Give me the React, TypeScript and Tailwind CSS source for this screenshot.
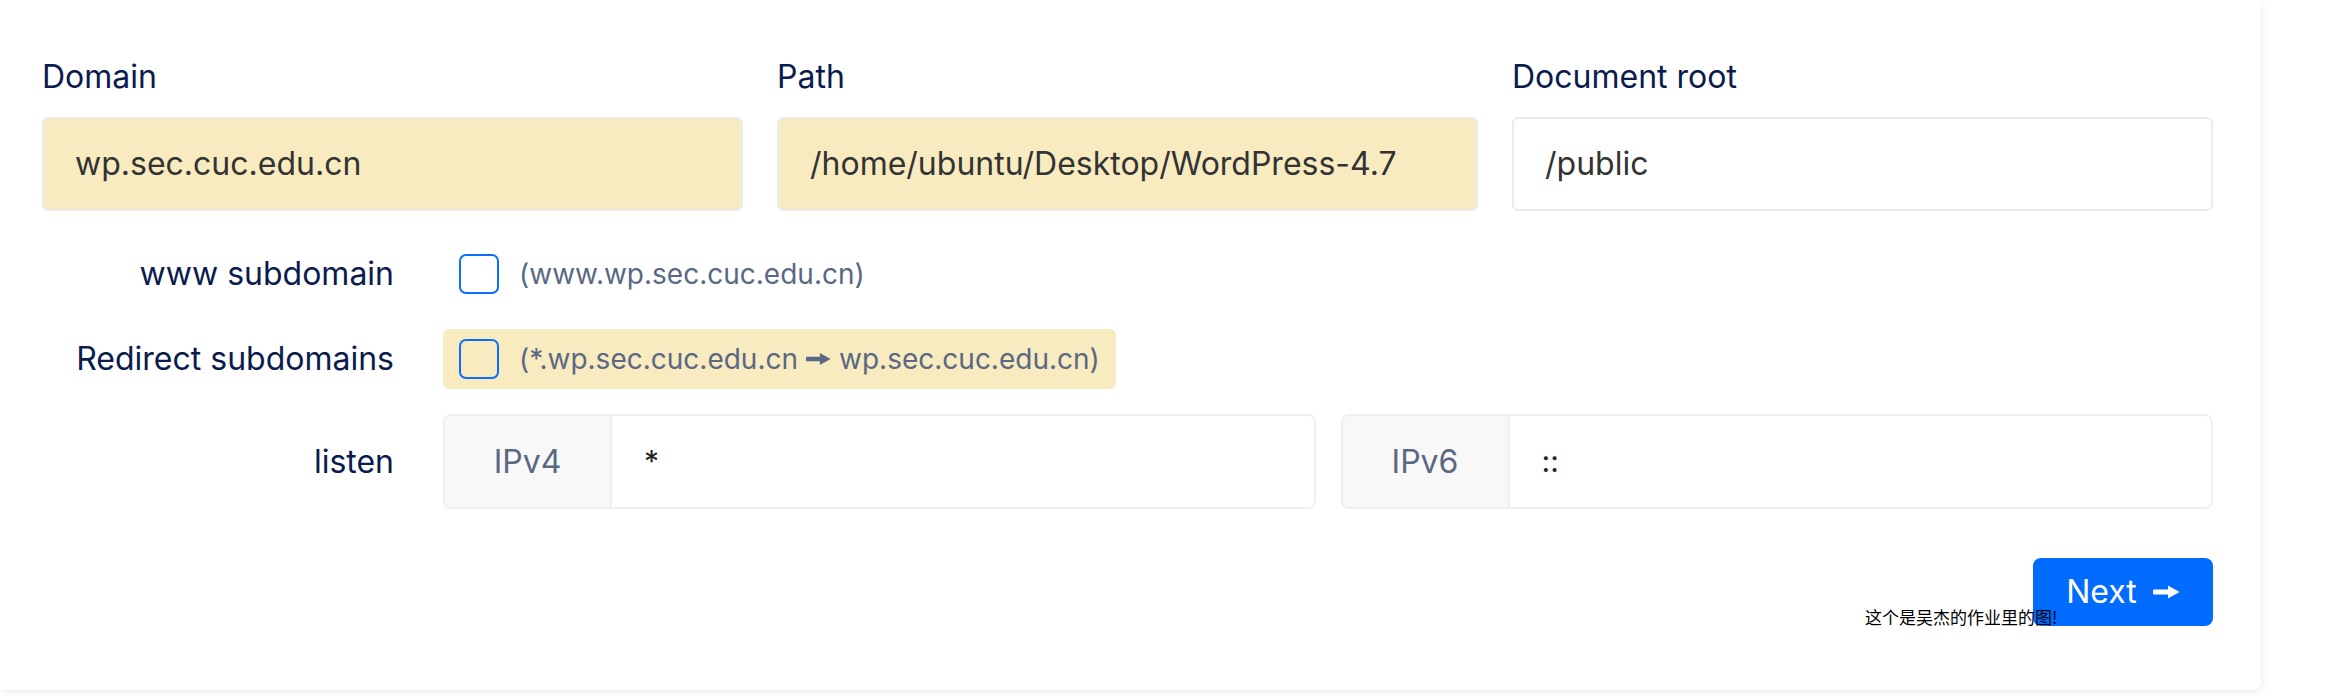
import React from 'react'

const font = { fontFamily: 'Inter, "Noto Sans", sans-serif' }

const Checkbox = () => (
  <span className="block w-[40px] h-[40px] shrink-0 rounded-[7px] border-2 border-[#0d6efd] bg-transparent" />
)

const Field = ({ label, value, filled }: { label: string; value: string; filled?: boolean }) => (
  <div className="flex flex-col">
    <label className="text-[32px] leading-[45px] text-[#0b1b4d] mb-[18px]">{label}</label>
    <div
      className={`h-[94px] rounded-[6px] border-2 border-[#ececec] flex items-center pl-[31px] text-[32px] text-[#333] ${
        filled ? 'bg-[#f9ebc0]' : 'bg-white'
      }`}
    >
      {value}
    </div>
  </div>
)

const ListenGroup = ({ name, value }: { name: string; value: string }) => (
  <div className="flex h-[95px] rounded-[8px] border-2 border-[#efefef] overflow-hidden">
    <div className="w-[167px] shrink-0 bg-[#f8f8f9] border-r-2 border-[#efefef] flex items-center justify-center text-[32px] text-[#5a6884]">
      {name}
    </div>
    <div className="flex-1 bg-white flex items-center pl-[32px] text-[30px] text-[#222]">{value}</div>
  </div>
)

// heavy right arrow (➞ in the original)
const Arrow = ({ w = 27 }: { w?: number }) => (
  <svg width={w} height="16" viewBox="0 0 27 16" className="inline-block align-middle" fill="currentColor">
    <rect x="0" y="5.5" width="17" height="5" rx="1" />
    <path d="M15 1.5 L26.5 8 L15 14.5 Z" />
  </svg>
)

const App = () => {
  return (
    <div className="w-[2332px] h-[696px] bg-white overflow-hidden" style={font}>
      <div className="relative w-[2261px] h-[690px] bg-white rounded-br-[8px] shadow-[1px_3px_6px_rgba(0,0,0,0.07)] pl-[42px] pr-[48px] pt-[54px]">
        {/* top fields */}
        <div className="grid grid-cols-3 gap-[34px]">
          <Field label="Domain" value="wp.sec.cuc.edu.cn" filled />
          <Field label="Path" value="/home/ubuntu/Desktop/WordPress-4.7" filled />
          <Field label="Document root" value="/public" />
        </div>

        {/* www subdomain */}
        <div className="flex items-center h-[60px] mt-[33px]">
          <div className="w-[352px] mr-[49px] text-right text-[32px] text-[#0b1b4d]">www subdomain</div>
          <div className="flex items-center gap-[20px] px-[16px] text-[28px] text-[#5a6884]">
            <Checkbox />
            <span>(www.wp.sec.cuc.edu.cn)</span>
          </div>
        </div>

        {/* redirect subdomains */}
        <div className="flex items-center h-[60px] mt-[25px]">
          <div className="w-[352px] mr-[49px] text-right text-[32px] text-[#0b1b4d]">Redirect subdomains</div>
          <div className="inline-flex items-center h-[60px] gap-[20px] px-[16px] rounded-[6px] bg-[#f9ebc0] text-[28px] text-[#5a6884]">
            <Checkbox />
            <span className="flex items-center gap-[8px]">
              <span>(*.wp.sec.cuc.edu.cn</span>
              <Arrow w={25} />
              <span>wp.sec.cuc.edu.cn)</span>
            </span>
          </div>
        </div>

        {/* listen */}
        <div className="flex items-center mt-[25px]">
          <div className="w-[352px] mr-[49px] text-right text-[32px] text-[#0b1b4d]">listen</div>
          <div className="flex-1 grid grid-cols-2 gap-[25px]">
            <ListenGroup name="IPv4" value="*" />
            <ListenGroup name="IPv6" value="::" />
          </div>
        </div>

        {/* footer */}
        <div className="flex justify-end mt-[49px]">
          <button className="w-[180px] h-[68px] rounded-[8px] bg-[#006bff] text-white text-[32px] flex items-center justify-center gap-[16px]">
            <span>Next</span>
            <Arrow />
          </button>
        </div>

        <span
          className="absolute left-[1865px] top-[606px] text-[17px] leading-[22px] text-black"
          style={{ fontFamily: '"Noto Sans CJK SC", sans-serif' }}
        >
          这个是吴杰的作业里的图!
        </span>
      </div>
    </div>
  )
}

export default App
